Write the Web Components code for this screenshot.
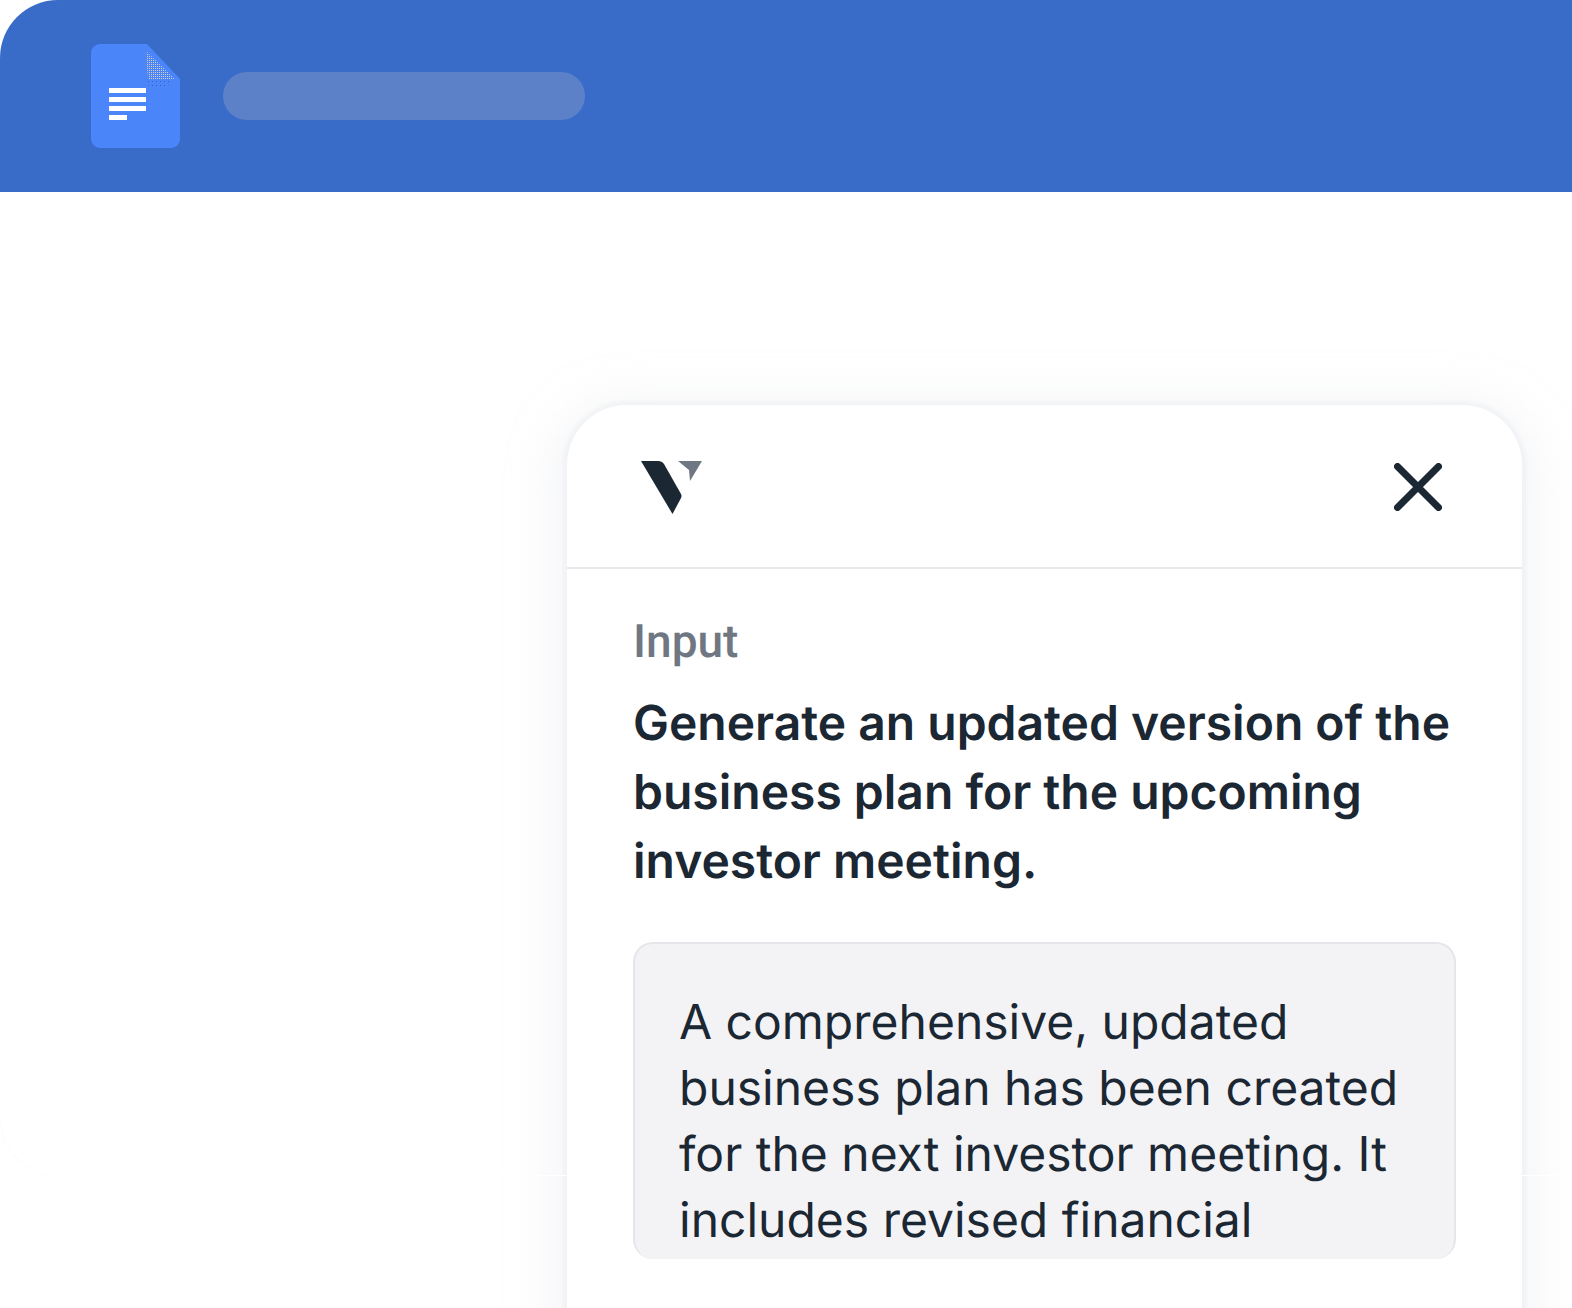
<!DOCTYPE html>
<html lang="en">
<head>
<meta charset="utf-8">
<title>Document assistant</title>
<style>
    html, body {
        margin: 0;
        height: 1308px;
        overflow: hidden;
        background: #fff;
    }
</style>
</head>
<body>
<app-stage>
    <doc-header slot="header"></doc-header>
    <assistant-panel>
        <prompt-input>Generate an updated version of the business plan for the upcoming investor meeting.</prompt-input>
        <response-box>A comprehensive, updated business plan has been created for the next investor meeting. It includes revised financial</response-box>
    </assistant-panel>
</app-stage>

<script>
class AppStage extends HTMLElement {
    constructor() {
        super();
        this.attachShadow({ mode: 'open' });
    }

    connectedCallback() {
        this.shadowRoot.innerHTML = `
            <style>
                :host {
                    display: block;
                    position: relative;
                    height: 1308px;
                    overflow: hidden;
                    font-family: Inter, "Liberation Sans", sans-serif;
                    color: #1b2733;
                    text-rendering: geometricPrecision;
                }
                .window {
                    display: flex;
                    flex-direction: column;
                    gap: 213px;
                }
                /* hairline where the app window ends, only seen over the panel shadow */
                .seam {
                    position: absolute;
                    z-index: 1;
                    left: 0;
                    right: 0;
                    top: 1175px;
                    height: 1px;
                    background: linear-gradient(to right, #fff 567px, transparent 567px, transparent 1522px, #fff 1522px);
                }
                .corner {
                    position: absolute;
                    left: 0;
                    top: 1118px;
                    width: 58px;
                    height: 58px;
                    box-sizing: border-box;
                    border-left: 1px solid #fbfbfb;
                    border-bottom: 1px solid #fbfbfb;
                    border-bottom-left-radius: 58px;
                }
                .body {
                    padding-left: 567px;
                    padding-right: 50px;
                }
            </style>
            <div class="window">
                <slot name="header"></slot>
                <div class="corner"></div>
                <div class="seam"></div>
                <div class="body"><slot></slot></div>
            </div>`;
    }
}

class DocHeader extends HTMLElement {
    constructor() {
        super();
        this.attachShadow({ mode: 'open' });
    }

    connectedCallback() {
        this.shadowRoot.innerHTML = `
            <style>
                :host {
                    display: flex;
                    align-items: center;
                    gap: 43px;
                    height: 192px;
                    padding-left: 91px;
                    background: #396cc9;
                    border-top-left-radius: 58px;
                }
                svg {
                    display: block;
                }
                .pill {
                    width: 362px;
                    height: 48px;
                    border-radius: 24px;
                    background: #5c81c9;
                }
            </style>
            <svg width="89" height="104" viewBox="0 0 89 104">
                <defs>
                    <pattern id="dots" width="2" height="2" patternUnits="userSpaceOnUse">
                        <rect width="2" height="2" fill="#4a86f9"/>
                        <rect width="1" height="1" fill="#cfcdbf"/>
                    </pattern>
                    <pattern id="shade" width="4" height="4" patternUnits="userSpaceOnUse">
                        <rect x="1" y="1" width="1" height="1" fill="#3463bb"/>
                    </pattern>
                </defs>
                <path d="M9 0H56L89 35V95a9 9 0 0 1-9 9H9a9 9 0 0 1-9-9V9a9 9 0 0 1 9-9Z" fill="#4a86f9"/>
                <path d="M56 8L83 34V35H58Q56 30 56 24Z" fill="url(#dots)"/>
                <path d="M56 37H80L76 44H58Z" fill="url(#shade)"/>
                <g fill="#fff">
                    <rect x="18" y="44" width="37" height="5"/>
                    <rect x="18" y="53" width="37" height="5"/>
                    <rect x="18" y="62" width="37" height="5"/>
                    <rect x="18" y="71" width="18" height="5"/>
                </g>
            </svg>
            <div class="pill"></div>`;
    }
}

class AssistantPanel extends HTMLElement {
    constructor() {
        super();
        this.attachShadow({ mode: 'open' });
    }

    connectedCallback() {
        this.shadowRoot.innerHTML = `
            <style>
                :host {
                    display: block;
                    width: 955px;
                    height: 1000px;
                    background: #fff;
                    border-radius: 60px 60px 0 0;
                    box-shadow: 0 0 3px 4px rgba(236, 238, 242, .55), 0 10px 40px 16px rgba(236, 237, 241, .5);
                }
                header {
                    display: flex;
                    align-items: center;
                    justify-content: space-between;
                    box-sizing: border-box;
                    height: 164px;
                    padding: 2px 80px 0 74px;
                    border-bottom: 2px solid #e9eaee;
                }
                header svg { display: block; }
                main {
                    display: flex;
                    flex-direction: column;
                    padding: 45px 66px 0 66px;
                }
            </style>
            <header>
                <svg width="62" height="53" viewBox="0 0 62 53">
                    <path d="M0 0H17Q21 0 23 3L40 33Q41 35 40 37L31.500 53Z" fill="#1b2733"/>
                    <path d="M37 0H61L49 20L48 9Z" fill="#6f7882"/>
                </svg>
                <svg width="48" height="48" viewBox="0 0 48 48">
                    <path d="M3.500 3.500L44.500 44.500M44.500 3.500L3.500 44.500" fill="none" stroke="#1b2733" stroke-width="7" stroke-linecap="round"/>
                </svg>
            </header>
            <main><slot></slot></main>`;
    }
}

class PromptInput extends HTMLElement {
    constructor() {
        super();
        this.attachShadow({ mode: 'open' });
    }

    connectedCallback() {
        this.shadowRoot.innerHTML = `
            <style>
                :host {
                    display: block;
                    margin-bottom: 47px;
                }
                .label {
                    font-family: Roboto, sans-serif;
                    font-weight: 500;
                    font-size: 46px;
                    line-height: 56px;
                    color: #6f7882;
                    margin-bottom: 18px;
                }
                .text {
                    font-weight: 600;
                    font-size: 48px;
                    line-height: 69px;
                    color: #1b2733;
                }
            </style>
            <div class="label">Input</div>
            <div class="text"><slot></slot></div>`;
    }
}

class ResponseBox extends HTMLElement {
    constructor() {
        super();
        this.attachShadow({ mode: 'open' });
    }

    connectedCallback() {
        this.shadowRoot.innerHTML = `
            <style>
                :host {
                    display: block;
                    box-sizing: border-box;
                    height: 317px;
                    padding: 45px 44px 0 44px;
                    overflow: hidden;
                    background: #f3f3f6;
                    border: 2px solid #e5e6ea;
                    border-bottom: 0;
                    border-radius: 20px;
                    font-size: 48px;
                    line-height: 66px;
                    color: #1b2733;
                }
            </style>
            <slot></slot>`;
    }
}

customElements.define("app-stage", AppStage);
customElements.define("doc-header", DocHeader);
customElements.define("assistant-panel", AssistantPanel);
customElements.define("prompt-input", PromptInput);
customElements.define("response-box", ResponseBox);
</script>
</body>
</html>
